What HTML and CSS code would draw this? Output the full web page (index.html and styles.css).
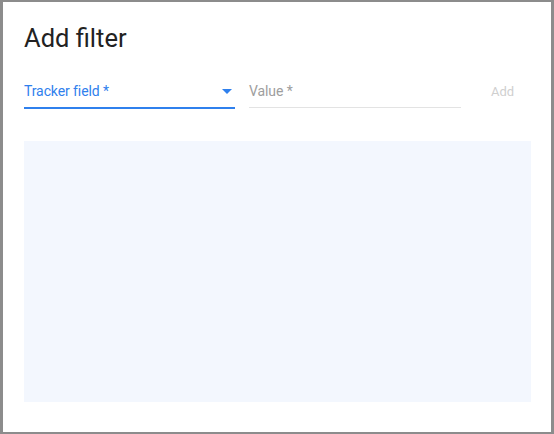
FILE: index.html
```html
<!DOCTYPE html>
<html>
<head>
<meta charset="utf-8">
<link rel="stylesheet" href="styles.css">
</head>
<body>
<div class="dialog">
  <h1 class="title">Add filter</h1>
  <div class="form-row">
    <div class="field field-select">
      <span class="label label-active">Tracker field *</span>
      <svg class="caret" width="10" height="5" viewBox="0 0 10 5"><path d="M0 0 L10 0 L5 5 Z" fill="#2f80ed"/></svg>
    </div>
    <div class="field field-text">
      <span class="label">Value *</span>
    </div>
    <button class="add-btn">Add</button>
  </div>
  <div class="panel"></div>
</div>
</body>
</html>
```
FILE: styles.css
```css
html, body {
  margin: 0;
  padding: 0;
}
body {
  width: 554px;
  height: 434px;
  background: #8c8c8c;
  font-family: Roboto, "Liberation Sans", sans-serif;
  padding: 2px 3px 2px 3px;
  box-sizing: border-box;
  overflow: hidden;
}
.dialog {
  background: #fff;
  width: 548px;
  height: 430px;
  box-sizing: border-box;
  padding: 20px 20px 0 21px;
  display: flex;
  flex-direction: column;
}
.title {
  margin: 0;
  font-size: 25.5px;
  font-weight: 400;
  color: #222;
  line-height: 32px;
}
.form-row {
  display: flex;
  align-items: flex-start;
  margin-top: 29px;
}
.field {
  width: 211px;
  height: 24px;
  display: flex;
  align-items: flex-start;
  justify-content: space-between;
  box-sizing: content-box;
}
.field-select {
  border-bottom: 2px solid #2f80ed;
}
.field-text {
  margin-left: 14px;
  border-bottom: 1px solid #e3e3e3;
  width: 212px;
}
.label {
  font-size: 14px;
  line-height: 16px;
  color: #9e9e9e;
  letter-spacing: -0.1px;
}
.label-active {
  color: #2f80ed;
}
.caret {
  margin-top: 6px;
  margin-right: 3px;
}
.add-btn {
  margin-left: 18px;
  background: none;
  border: none;
  padding: 0 0 0 12px;
  font-family: Roboto, "Liberation Sans", sans-serif;
  font-size: 13px;
  line-height: 16px;
  color: #cfcfcf;
  margin-top: 1px;
}
.panel {
  margin-top: 32px;
  width: 507px;
  height: 261px;
  background: #f3f7fe;
}
```
